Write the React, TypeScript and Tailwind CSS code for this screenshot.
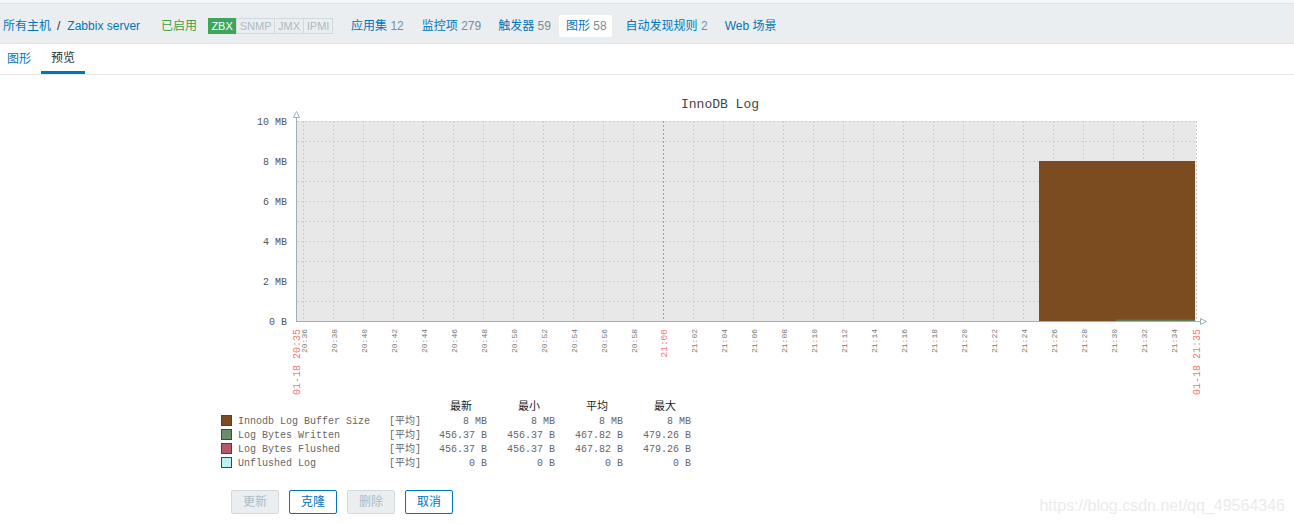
const MONO = '"Liberation Mono", "Noto Sans CJK SC", monospace';

const navItems = [
  { label: "应用集", count: "12", ml: "ml-[18px]" },
  { label: "监控项", count: "279", ml: "ml-[18px]" },
  { label: "触发器", count: "59", ml: "ml-[17px]" },
];

const legendRows = [
  { name: "Innodb Log Buffer Size", color: "#7b4c1f", vals: ["8 MB", "8 MB", "8 MB", "8 MB"] },
  { name: "Log Bytes Written", color: "#6b8e69", vals: ["456.37 B", "456.37 B", "467.82 B", "479.26 B"] },
  { name: "Log Bytes Flushed", color: "#b5566b", vals: ["456.37 B", "456.37 B", "467.82 B", "479.26 B"] },
  { name: "Unflushed Log", color: "#bdf0f0", vals: ["0 B", "0 B", "0 B", "0 B"] },
];

const yLabels = ["10 MB", "8 MB", "6 MB", "4 MB", "2 MB", "0 B"];
const valueX = [487, 555, 623, 691];
const headX = [461, 529, 597, 665];
const heads = ["最新", "最小", "平均", "最大"];

const fmt = (m: number) => `${Math.floor(m / 60)}:${String(m % 60).padStart(2, "0")}`;

function Graph() {
  const ticks = Array.from({ length: 30 }, (_, i) => i);
  return (
    <svg width={1005} height={385} viewBox="210 90 1005 385" className="block">
      <text x={720} y={108} textAnchor="middle" fontFamily={MONO} fontSize={13} fill="#444">
        InnoDB Log
      </text>

      {/* plot area */}
      <rect x={297} y={121} width={899} height={200} fill="#e8e8e8" />
      {Array.from({ length: 10 }, (_, i) => (
        <line key={"h" + i} x1={297} x2={1196} y1={121.5 + i * 20} y2={121.5 + i * 20} stroke="#cfcfcf" strokeDasharray="2 2" />
      ))}
      {ticks.map((i) => (
        <line
          key={"v" + i}
          x1={303.5 + i * 30}
          x2={303.5 + i * 30}
          y1={121}
          y2={321}
          stroke={i === 12 ? "#a0a0a0" : "#cfcfcf"}
          strokeDasharray="2 2"
        />
      ))}
      <line x1={1196.5} x2={1196.5} y1={121} y2={321} stroke="#cfcfcf" strokeDasharray="2 2" />

      {/* data */}
      <rect x={1039} y={161} width={156} height={160} fill="#7b4c1f" />
      <rect x={1116} y={319.5} width={79} height={1.5} fill="#5f7f5a" />

      {/* axes */}
      <line x1={296.5} x2={296.5} y1={116} y2={322} stroke="#9fb0bb" />
      <polygon points="296.5,111.5 293.5,117.5 299.5,117.5" fill="#fff" stroke="#9fb0bb" />
      <line x1={296} x2={1200} y1={321.5} y2={321.5} stroke="#9fb0bb" />
      <polygon points="1206.5,321.5 1200.5,318.5 1200.5,324.5" fill="#fff" stroke="#9fb0bb" />

      {/* y labels */}
      {yLabels.map((l, i) => (
        <text key={l} x={287} y={124.5 + i * 40} textAnchor="end" fontFamily={MONO} fontSize={10} fill="#555">
          {l}
        </text>
      ))}

      {/* x labels */}
      {ticks.map((i) =>
        i === 12 ? null : (
          <text
            key={"t" + i}
            transform={`translate(${306.5 + i * 30},329) rotate(-90)`}
            textAnchor="end"
            fontFamily={MONO}
            fontSize={8}
            fill="#777"
          >
            {fmt(20 * 60 + 36 + i * 2)}
          </text>
        )
      )}
      <text transform="translate(667,329) rotate(-90)" textAnchor="end" fontFamily={MONO} fontSize={9.5} fill="#f07878">
        21:00
      </text>
      <text transform="translate(300,329) rotate(-90)" textAnchor="end" fontFamily={MONO} fontSize={10} fill="#f07878">
        01-18 20:35
      </text>
      <text transform="translate(1200,329) rotate(-90)" textAnchor="end" fontFamily={MONO} fontSize={10} fill="#f07878">
        01-18 21:35
      </text>

      {/* legend */}
      {heads.map((h, i) => (
        <text key={h} x={headX[i]} y={410} textAnchor="middle" fontFamily={MONO} fontSize={11} fill="#222">
          {h}
        </text>
      ))}
      {legendRows.map((r, i) => {
        const y = 424 + i * 14;
        return (
          <g key={r.name}>
            <rect x={221.5} y={y - 8.5} width={10} height={10} fill={r.color} stroke="#444" />
            <text x={238} y={y} fontFamily={MONO} fontSize={10} fill="#666">
              {r.name}
            </text>
            <text x={389} y={y} fontFamily={MONO} fontSize={10} fill="#666">
              [平均]
            </text>
            {r.vals.map((v, j) => (
              <text key={j} x={valueX[j]} y={y} textAnchor="end" fontFamily={MONO} fontSize={10} fill="#666">
                {v}
              </text>
            ))}
          </g>
        );
      })}
    </svg>
  );
}

export default function App() {
  return (
    <div className="relative h-[525px] w-full overflow-hidden bg-white font-['Liberation_Sans','Noto_Sans_CJK_SC',sans-serif] text-[12px]">
      <div className="h-[3px] bg-[#f6f7f8]" />
      <div className="flex h-[41px] items-center border-y border-[#dde2e5] bg-[#ebeef0] pl-[3px] pt-[4px]">
        <a className="text-[#0275b8]">所有主机</a>
        <span className="ml-[6px] text-[#1f2c33]">/</span>
        <a className="ml-[7px] text-[#0275b8]">Zabbix server</a>
        <span className="ml-[21px] text-[#429e47]">已启用</span>
        <div className="ml-[11px] flex h-[16px] text-[11px] leading-[14px]">
          <span className="w-[28px] border border-[#3ea55d] bg-[#3ea55d] text-center text-white">ZBX</span>
          <span className="w-[39px] border border-[#d2d9dd] text-center text-[#acbbc2]">SNMP</span>
          <span className="w-[29px] border border-l-0 border-[#d2d9dd] text-center text-[#acbbc2]">JMX</span>
          <span className="w-[29px] border border-l-0 border-[#d2d9dd] text-center text-[#acbbc2]">IPMI</span>
        </div>
        {navItems.map((n) => (
          <a key={n.label} className={`${n.ml} text-[#0275b8]`}>
            {n.label} <span className="text-[#768d99]">{n.count}</span>
          </a>
        ))}
        <div className="ml-[8px] flex h-[22px] items-center rounded-[2px] bg-white pl-[7px] pr-[5px]">
          <a className="text-[#0275b8]">
            图形 <span className="text-[#768d99]">58</span>
          </a>
        </div>
        <a className="ml-[14px] text-[#0275b8]">
          自动发现规则 <span className="text-[#768d99]">2</span>
        </a>
        <a className="ml-[17px] text-[#0275b8]">Web 场景</a>
      </div>

      <div className="flex h-[31px] border-b border-[#e5e9eb]">
        <div className="flex items-center px-[7px] text-[#0275b8]">图形</div>
        <div className="ml-[3px] flex items-center border-b-[3px] border-[#0275b8] px-[10px] text-[#1f2c33]">预览</div>
      </div>

      <div className="ml-[210px] mt-[15px]">
        <Graph />
      </div>

      <div className="ml-[231px] mt-[15px] flex gap-[10px]">
        <button className="h-[24px] w-[48px] rounded-[2px] border border-[#d2d9dd] bg-[#ebeef0] text-[#acbbc2]">更新</button>
        <button className="h-[24px] w-[48px] rounded-[2px] border border-[#0275b8] bg-white text-[#0275b8]">克隆</button>
        <button className="h-[24px] w-[48px] rounded-[2px] border border-[#d2d9dd] bg-[#ebeef0] text-[#acbbc2]">删除</button>
        <button className="h-[24px] w-[48px] rounded-[2px] border border-[#0275b8] bg-white text-[#0275b8]">取消</button>
      </div>

      <div className="absolute bottom-[7px] right-[9px] text-[16px] text-[#ebebeb]">https://blog.csdn.net/qq_49564346</div>
    </div>
  );
}
